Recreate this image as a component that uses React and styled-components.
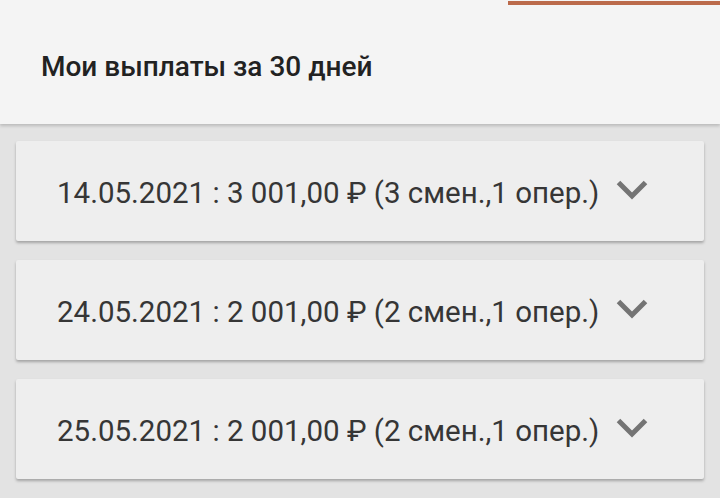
import React from "react";
import styled, { createGlobalStyle } from "styled-components";

const Global = createGlobalStyle`
  html, body { margin: 0; padding: 0; background: #e3e3e3; }
  body { font-family: Roboto, "Noto Sans", sans-serif; }
  #root { min-height: 498px; }
`;

const Page = styled.div`
  width: 720px;
  min-height: 498px;
  background: #e3e3e3;
  display: flex;
  flex-direction: column;
`;

const Header = styled.header`
  position: relative;
  height: 124px;
  background: #f4f4f4;
  box-shadow: 0 2px 3px rgba(0, 0, 0, 0.18);
  display: flex;
  align-items: center;
  padding-left: 41px;
  z-index: 1;
`;

const TabIndicator = styled.div`
  position: absolute;
  top: 1px;
  left: 508px;
  right: 0;
  height: 4px;
  background: #bb6a4b;
`;

const Title = styled.h1`
  margin: 8px 0 0 0;
  font-family: Roboto, sans-serif;
  font-weight: 500;
  font-size: 28px;
  color: #222;
`;

const List = styled.div`
  display: flex;
  flex-direction: column;
  gap: 19px;
  padding: 17px 16px 0 16px;
`;

const Card = styled.div`
  height: 100px;
  background: #eeeeee;
  border-radius: 2px;
  box-shadow: 0 2px 3px rgba(0, 0, 0, 0.28);
  display: flex;
  align-items: center;
  padding-left: 41px;
  gap: 16px;
`;

const Label = styled.span`
  margin-top: 4px;
  font-family: Roboto, sans-serif;
  font-weight: 400;
  font-size: 29.5px;
  color: #363636;
  white-space: nowrap;
`;

const Chevron = styled.svg`
  width: 34px;
  height: 22px;
  flex: none;
  margin-top: -2px;
`;

const items = [
  "14.05.2021 : 3 001,00 ₽ (3 смен.,1 опер.)",
  "24.05.2021 : 2 001,00 ₽ (2 смен.,1 опер.)",
  "25.05.2021 : 2 001,00 ₽ (2 смен.,1 опер.)",
];

export default function App() {
  return (
    <Page>
      <Global />
      <Header>
        <TabIndicator />
        <Title>Мои выплаты за 30 дней</Title>
      </Header>
      <List>
        {items.map((t) => (
          <Card key={t}>
            <Label>{t}</Label>
            <Chevron viewBox="0 0 34 22">
              <path d="M3.5 3.5 L17 17 L30.5 3.5" fill="none" stroke="#747474" strokeWidth="5" />
            </Chevron>
          </Card>
        ))}
      </List>
    </Page>
  );
}
